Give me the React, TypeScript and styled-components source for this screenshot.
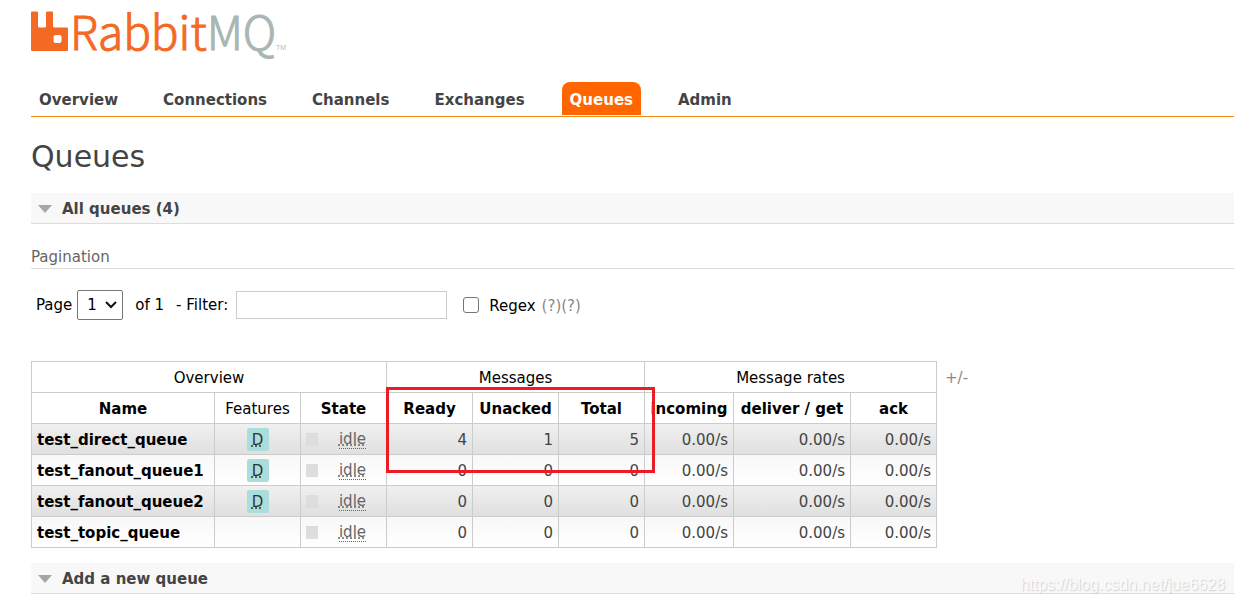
import React from 'react';
import styled, { createGlobalStyle, css } from 'styled-components';

const GlobalStyle = createGlobalStyle`
  * { box-sizing: border-box; }
  body {
    margin: 0;
    background: #fff;
    color: #444;
    font: 15px/20px Verdana, "DejaVu Sans", sans-serif;
    overflow-x: hidden;
  }
`;

const Page = styled.div`
  position: relative;
  padding: 0 0 8px 31px;
`;

const LogoLink = styled.a`
  display: block;
  height: 82px;
`;

const LogoImage = styled.svg`
  display: block;
  overflow: visible;
`;

const Wordmark = styled.text`
  font-family: "Noto Sans CJK SC", "Liberation Sans", sans-serif;
  font-size: 46px;
  font-weight: 300;
  stroke-width: 1px;
`;

const Trademark = styled.text`
  font: 7px "Liberation Sans", Arial, sans-serif;
  fill: #b4bdb9;
`;

const Tabs = styled.nav`
  display: flex;
  gap: 29px;
  padding-bottom: 1px;
  border-bottom: 1px solid #f08a10;
`;

const Tab = styled.a<{ $active?: boolean }>`
  padding: 8px 8px 5px;
  border-radius: 8px 8px 0 0;
  font-weight: bold;
  text-decoration: none;
  color: ${p => (p.$active ? '#fff' : '#444')};
  background: ${p => (p.$active ? '#f60' : 'transparent')};
`;

const Title = styled.h1`
  margin: 20px 0 16px;
  font-size: 30px;
  line-height: 40px;
  font-weight: normal;
`;

const SectionHeader = styled.h2`
  margin: 0;
  border-bottom: 1px solid #ddd;
  background: #f8f8f8;
`;

const SectionToggle = styled.button`
  display: flex;
  align-items: center;
  gap: 10px;
  width: 100%;
  height: 30px;
  padding: 2px 7px 0;
  border: 0;
  background: none;
  color: #444;
  font: inherit;
  font-size: 15px;
  font-weight: bold;
  text-align: left;
`;

const Subheading = styled.h3`
  margin: 23px 0 21px;
  border-bottom: 1px solid #ddd;
  color: #666;
  font-size: 15px;
  line-height: 21px;
  font-weight: normal;
`;

const FilterBar = styled.form`
  display: flex;
  align-items: center;
  padding-left: 5px;
  margin-bottom: 41px;
  color: #000;
`;

const PageSelectWrap = styled.span`
  display: grid;
  align-items: center;
  margin: 0 12px 0 5px;

  > * { grid-area: 1 / 1; }
  > svg { justify-self: end; margin-right: 5px; pointer-events: none; }
`;

const PageSelect = styled.select`
  appearance: none;
  width: 46px;
  height: 30px;
  padding: 0 9px;
  border: 1px solid #767676;
  border-radius: 2px;
  background: #fff;
  color: #000;
  font: inherit;
`;

const FilterLabel = styled.label`
  margin: 0 8px 0 12px;
`;

const FilterInput = styled.input`
  width: 211px;
  height: 28px;
  padding: 4px;
  border: 1px solid #ccc;
  font: inherit;
`;

const RegexBox = styled.input`
  appearance: none;
  width: 16px;
  height: 16px;
  margin: 0 10px 0 16px;
  border: 1px solid #767676;
  border-radius: 3px;
  background: #fff;
`;

const Help = styled.a`
  padding-top: 2px;
  color: #888;
  text-decoration: none;
`;

const RegexLabel = styled.label`
  padding-top: 2px;
  margin-right: 6px;
`;

const TableArea = styled.div`
  position: relative;
  display: flex;
  align-items: flex-start;
  gap: 8px;
  margin-bottom: 15px;
`;

const QueueTable = styled.table`
  flex: none;
  width: 906px;
  table-layout: fixed;
  border-collapse: collapse;
`;

const cell = css`
  height: 31px;
  padding: 1px 5px 0;
  border: 1px solid #ccc;
  white-space: nowrap;
`;

const GroupHead = styled.th`
  ${cell}
  color: #000;
  font-weight: normal;
`;

const Head = styled.th<{ $plain?: boolean }>`
  ${cell}
  color: #000;
  font-weight: ${p => (p.$plain ? 'normal' : 'bold')};
`;

const Row = styled.tr<{ $shaded: boolean }>`
  background: ${p =>
    p.$shaded ? 'linear-gradient(#f0f0f0, #dfdfdf)' : 'linear-gradient(#f8f8f8, #fff)'};
`;

const Cell = styled.td<{ $align?: string }>`
  ${cell}
  text-align: ${p => p.$align || 'left'};
`;

const QueueLink = styled.a`
  color: #000;
  font-weight: bold;
  text-decoration: none;
`;

const Feature = styled.abbr`
  display: block;
  width: 22px;
  height: 23px;
  margin: 0 auto;
  border-radius: 2px;
  background: #aadedc;
  color: #333;
  line-height: 24px;
  text-decoration: underline dotted;
`;

const State = styled.div`
  display: flex;
  align-items: center;

  &::before {
    content: "";
    width: 12px;
    height: 13px;
    margin-right: 6px;
    background: #ddd;
  }
`;

const StateText = styled.abbr`
  margin: 0 auto;
  border-bottom: 1px dotted #666;
  color: #666;
  line-height: 18px;
  text-decoration: underline dotted;
`;

const ColumnsLink = styled.a`
  padding-top: 7px;
  color: #888;
  text-decoration: none;
`;

const Highlight = styled.div`
  position: absolute;
  left: 355px;
  top: 26px;
  width: 269px;
  height: 86px;
  border: 3px solid #ed1c24;
  pointer-events: none;
`;

const Watermark = styled.div`
  position: absolute;
  right: 9px;
  bottom: 7px;
  color: #fafafa;
  font: 16px/20px "Liberation Sans", Arial, sans-serif;
  text-shadow: 1px 1px 1px #d0d0d0;
  pointer-events: none;
`;

const tabs = ['Overview', 'Connections', 'Channels', 'Exchanges', 'Queues', 'Admin'];
const columnWidths = [183, 86, 86, 86, 86, 86, 89, 117, 86];
const queues = [
  { name: 'test_direct_queue', durable: true, counts: [4, 1, 5] },
  { name: 'test_fanout_queue1', durable: true, counts: [0, 0, 0] },
  { name: 'test_fanout_queue2', durable: true, counts: [0, 0, 0] },
  { name: 'test_topic_queue', durable: false, counts: [0, 0, 0] },
];

function Logo() {
  return (
    <LogoImage width="264" height="72" viewBox="0 0 264 72" role="img" aria-label="RabbitMQ">
      <path
        fill="#f46a25"
        fillRule="evenodd"
        d="M1 11.500h5q1 0 1 1V26q0 1.500 1.500 1.500h5Q15 27.500 15 26V12.500q0-1 1-1h5q1 0 1 1V26q0 1.500 1.500 1.500H36q1 0 1 1V50q0 1-1 1H1q-1 0-1-1V12.500q0-1 1-1zM24.500 35q-2 0-2 2v4q0 2 2 2h4q2 0 2-2v-4q0-2-2-2z"
      />
      <Wordmark x="39" y="50">
        <tspan fill="#f46a25" stroke="#f46a25">Rabbit</tspan>
        <tspan fill="#a9b6b1" stroke="#a9b6b1">MQ</tspan>
      </Wordmark>
      <Trademark x="245" y="50">TM</Trademark>
    </LogoImage>
  );
}

function Section({ title }: { title: string }) {
  return (
    <SectionHeader>
      <SectionToggle type="button">
        <svg width="14" height="8" viewBox="0 0 14 8" aria-hidden="true">
          <path d="M0 0h14L7 8z" fill="#a6a6a6" />
        </svg>
        {title}
      </SectionToggle>
    </SectionHeader>
  );
}

export default function App() {
  return (
    <>
      <GlobalStyle />
      <Page>
        <LogoLink href="#">
          <Logo />
        </LogoLink>
        <Tabs>
          {tabs.map(t => (
            <Tab key={t} href="#" $active={t === 'Queues'}>{t}</Tab>
          ))}
        </Tabs>
        <Title>Queues</Title>
        <Section title="All queues (4)" />
        <Subheading>Pagination</Subheading>
        <FilterBar>
          <label htmlFor="page">Page</label>
          <PageSelectWrap>
            <PageSelect id="page" defaultValue="1">
              <option>1</option>
            </PageSelect>
            <svg width="14" height="10" viewBox="0 0 14 10" aria-hidden="true">
              <path d="M2 2l5 5 5-5" fill="none" stroke="#111" strokeWidth="2" />
            </svg>
          </PageSelectWrap>
          <span>of 1</span>
          <FilterLabel htmlFor="filter">- Filter:</FilterLabel>
          <FilterInput id="filter" type="text" />
          <RegexBox id="regex" type="checkbox" />
          <RegexLabel htmlFor="regex">Regex</RegexLabel>
          <Help href="#">(?)</Help>
          <Help href="#">(?)</Help>
        </FilterBar>
        <TableArea>
          <QueueTable>
            <colgroup>
              {columnWidths.map((w, i) => <col key={i} width={w} />)}
            </colgroup>
            <thead>
              <tr>
                <GroupHead colSpan={3}>Overview</GroupHead>
                <GroupHead colSpan={3}>Messages</GroupHead>
                <GroupHead colSpan={3}>Message rates</GroupHead>
              </tr>
              <tr>
                <Head>Name</Head>
                <Head $plain>Features</Head>
                <Head>State</Head>
                <Head>Ready</Head>
                <Head>Unacked</Head>
                <Head>Total</Head>
                <Head>incoming</Head>
                <Head>deliver / get</Head>
                <Head>ack</Head>
              </tr>
            </thead>
            <tbody>
              {queues.map((q, i) => (
                <Row key={q.name} $shaded={i % 2 === 0}>
                  <Cell><QueueLink href="#">{q.name}</QueueLink></Cell>
                  <Cell $align="center">{q.durable && <Feature title="durable: true">D</Feature>}</Cell>
                  <Cell><State><StateText>idle</StateText></State></Cell>
                  {q.counts.map((c, k) => <Cell key={k} $align="right">{c}</Cell>)}
                  <Cell $align="right">0.00/s</Cell>
                  <Cell $align="right">0.00/s</Cell>
                  <Cell $align="right">0.00/s</Cell>
                </Row>
              ))}
            </tbody>
          </QueueTable>
          <ColumnsLink href="#">+/-</ColumnsLink>
          <Highlight />
        </TableArea>
        <Section title="Add a new queue" />
        <Watermark>https://blog.csdn.net/jue6628</Watermark>
      </Page>
    </>
  );
}
